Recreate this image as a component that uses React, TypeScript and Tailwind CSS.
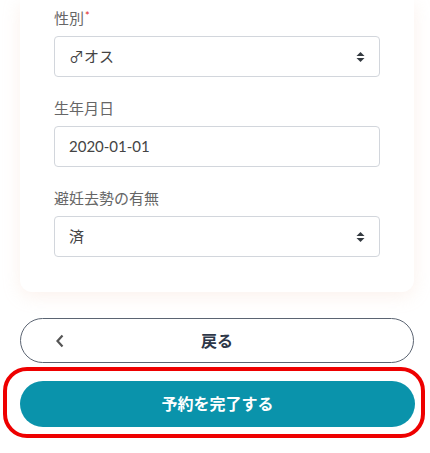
import React from 'react';

const font = "font-['Lato','Noto_Sans_CJK_JP',sans-serif]";

function SelectArrows() {
    return (
        <svg width="9" height="12" viewBox="0 0 9 12" className="absolute right-[14px] top-1/2 -translate-y-1/2">
            <path d="M4.5 1 L8.5 5 L0.5 5 Z" fill="#343a40" />
            <path d="M4.5 11 L8.5 7 L0.5 7 Z" fill="#343a40" />
        </svg>
    );
}

function Field({ label, required, children }: { label: string; required?: boolean; children: React.ReactNode }) {
    return (
        <div className="flex flex-col">
            <div className="h-5 leading-5 text-[15px] text-[#666] mb-2">
                {label}
                {required && <span className="text-[#e02424] text-[11px] align-top relative top-[-2px] ml-[1px]">*</span>}
            </div>
            {children}
        </div>
    );
}

function Box({ value, select }: { value: string; select?: boolean }) {
    return (
        <div className="relative h-[41px] rounded-[4px] border border-[#d2d6dc] bg-white flex items-center pl-[14px] text-[15px] text-[#444]">
            {value}
            {select && <SelectArrows />}
        </div>
    );
}

export default function App() {
    return (
        <div className={`min-h-screen bg-white pl-5 pr-4 ${font}`}>
            <div className="rounded-b-xl bg-white px-[34px] pt-2 pb-[35px] shadow-[0_4px_18px_rgba(235,190,170,0.22)] flex flex-col gap-[21px]">
                <Field label="性別" required>
                    <Box value="♂オス" select />
                </Field>
                <Field label="生年月日">
                    <Box value="2020-01-01" />
                </Field>
                <Field label="避妊去勢の有無">
                    <Box value="済" select />
                </Field>
            </div>

            <button className="mt-[26px] relative w-full h-[45px] rounded-full border border-[#5b6472] bg-white flex items-center justify-center text-[16px] font-bold text-[#2d3748]">
                <svg width="10" height="14" viewBox="0 0 10 14" className="absolute left-[34px] top-1/2 -translate-y-1/2">
                    <path d="M7.5 1.5 L2.5 7 L7.5 12.5" fill="none" stroke="#555" strokeWidth="2.2" />
                </svg>
                戻る
            </button>

            <div className="mt-1 -ml-[17px] -mr-[11px] rounded-[24px] border-4 border-[#ee0000] pl-[13px] pr-[6px] pt-[10px] pb-[7px]">
                <button className="w-full h-[46px] rounded-full bg-[#0a93ab] flex items-center justify-center text-[16px] font-bold text-white">
                    予約を完了する
                </button>
            </div>
        </div>
    );
}
